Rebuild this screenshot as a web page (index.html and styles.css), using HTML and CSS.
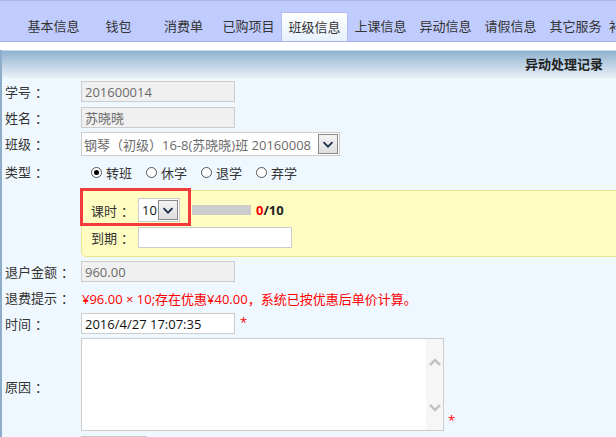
FILE: index.html
```html
<!DOCTYPE html>
<html lang="zh-CN">
<head>
    <meta charset="UTF-8">
    <title>异动处理记录</title>
    <link rel="stylesheet" href="styles.css">
</head>
<body>
    <div class="tabs">
        <a class="tab">基本信息</a>
        <a class="tab">钱包</a>
        <a class="tab">消费单</a>
        <a class="tab">已购项目</a>
        <a class="tab active">班级信息</a>
        <a class="tab">上课信息</a>
        <a class="tab">异动信息</a>
        <a class="tab">请假信息</a>
        <a class="tab">其它服务</a>
        <a class="tab last">补课信息</a>
    </div>

    <div class="panel">
        <div class="panel-head">异动处理记录</div>
        <div class="form">
            <div class="row r-no">
                <span class="lbl">学号<span class="colon">：</span></span>
                <input class="field readonly" type="text" value="201600014" readonly>
            </div>
            <div class="row r-name">
                <span class="lbl">姓名<span class="colon">：</span></span>
                <input class="field readonly" type="text" value="苏晓晓" readonly>
            </div>
            <div class="row r-class">
                <span class="lbl">班级<span class="colon">：</span></span>
                <div class="select select-class">
                    <span class="select-text">钢琴（初级）16-8(苏晓晓)班 20160008</span>
                    <span class="select-btn">
                        <svg width="20" height="20" viewBox="0 0 20 20"><path d="M5 8 L10 13 L15 8" fill="none" stroke="#1f2c48" stroke-width="2"/></svg>
                    </span>
                </div>
            </div>
            <div class="row r-type">
                <span class="lbl">类型<span class="colon">：</span></span>
                <div class="radios">
                    <span class="radio checked"></span><span class="radio-text">转班</span>
                    <span class="radio"></span><span class="radio-text">休学</span>
                    <span class="radio"></span><span class="radio-text">退学</span>
                    <span class="radio"></span><span class="radio-text">弃学</span>
                </div>
            </div>

            <div class="transfer">
                <div class="mark"></div>
                <div class="row">
                    <span class="lbl-in">课时<span class="colon">：</span></span>
                    <div class="select select-hours">
                        <span class="select-text dark">10</span>
                        <span class="select-btn">
                            <svg width="20" height="20" viewBox="0 0 20 20"><path d="M5 8 L10 13 L15 8" fill="none" stroke="#1f2c48" stroke-width="2"/></svg>
                        </span>
                    </div>
                    <span class="progress"></span>
                    <span class="count"><em>0</em>/10</span>
                </div>
                <div class="row r-due">
                    <span class="lbl-in">到期<span class="colon">：</span></span>
                    <input class="field due" type="text" value="">
                </div>
            </div>

            <div class="row r-amount">
                <span class="lbl">退户金额<span class="colon">：</span></span>
                <input class="field readonly" type="text" value="960.00" readonly>
            </div>
            <div class="row r-hint">
                <span class="lbl">退费提示<span class="colon">：</span></span>
                <span class="hint">¥96.00 × 10;存在优惠¥40.00，系统已按优惠后单价计算。</span>
            </div>
            <div class="row r-time">
                <span class="lbl">时间<span class="colon">：</span></span>
                <input class="field plain" type="text" value="2016/4/27 17:07:35">
                <span class="req">*</span>
            </div>
            <div class="row r-reason">
                <span class="lbl">原因<span class="colon">：</span></span>
                <div class="textarea">
                    <span class="textarea-body"></span>
                    <span class="scroll">
                        <svg width="14" height="10" viewBox="0 0 14 10"><path d="M2 8 L7 3 L12 8" fill="none" stroke="#c4c4c4" stroke-width="2.5"/></svg>
                        <svg width="14" height="10" viewBox="0 0 14 10"><path d="M2 2 L7 7 L12 2" fill="none" stroke="#c4c4c4" stroke-width="2.5"/></svg>
                    </span>
                </div>
                <span class="req req-bottom">*</span>
            </div>
            <div class="row r-next">
                <span class="lbl"></span>
                <span class="next-box"></span>
            </div>
        </div>
    </div>
</body>
</html>
```

FILE: styles.css
```css
body {
    margin: 0;
    font-family: "Open Sans", "Noto Sans CJK SC", sans-serif;
    font-size: 13px;
    color: #333;
    background: #fff;
    overflow: hidden;
    height: 437px;
}
.tabs {
    display: flex;
    align-items: flex-end;
    height: 42px;
    box-sizing: border-box;
    padding-left: 21px;
    background: #c1ccfe;
    border-top: 1px solid #a9b7e6;
    border-bottom: 1px solid #a9b0f0;
    overflow: hidden;
}
.tab {
    flex: 0 0 65px;
    height: 29px;
    line-height: 29px;
    text-align: center;
    color: #333;
    white-space: nowrap;
}
.tab.active {
    flex-basis: 67px;
    height: 30px;
    line-height: 28px;
    margin-bottom: -1px;
    box-sizing: border-box;
    border: 1px solid #b4bcf2;
    border-bottom: none;
    background: linear-gradient(#ffffff, #e5f1fb);
}
.tab.last {
    text-align: left;
    padding-left: 1px;
}
.panel {
    margin-top: 8px;
    border-left: 2px solid #8dadcb;
    background: #f0f8ff;
    height: 387px;
}
.panel-head {
    height: 28px;
    box-sizing: border-box;
    border-top: 1px solid #c6d9ea;
    background: linear-gradient(#8fb2d0, #e9f1f8);
    text-align: right;
    padding-right: 13px;
    line-height: 27px;
    font-weight: bold;
    color: #222;
}
.form {
    padding: 3px 0 0 3px;
}
.row {
    display: flex;
    align-items: center;
}
.lbl {
    flex: none;
    width: 76px;
    color: #333;
    line-height: 18px;
    white-space: nowrap;
}
.colon {
    padding-left: 4px;
}
.field {
    box-sizing: border-box;
    width: 154px;
    height: 21px;
    margin: 0;
    padding: 0 3px;
    border: 1px solid #ccc;
    font-family: inherit;
    font-size: 13px;
    outline: none;
}
.field.readonly {
    background: #f0f0f0;
    color: #6b6b6b;
}
.field.plain {
    background: #fff;
    color: #111;
}
.r-name {
    margin-top: 5px;
}
.r-class {
    margin-top: 4px;
}
.select {
    display: flex;
    align-items: center;
    box-sizing: border-box;
    height: 24px;
    border: 1px solid #ccc;
    background: #fff;
}
.select-class {
    width: 259px;
}
.select-text {
    flex: 1;
    padding-left: 2px;
    color: #6b6b6b;
    white-space: nowrap;
    overflow: hidden;
}
.select-text.dark {
    color: #111;
}
.select-btn {
    flex: none;
    width: 20px;
    height: 20px;
    margin-right: 1px;
    box-sizing: border-box;
    border: 1px solid #8a8a8a;
    background: linear-gradient(#f4f4f4, #dedede);
    display: flex;
    align-items: center;
    justify-content: center;
}
.select-btn svg {
    width: 18px;
    height: 18px;
}
.r-type {
    margin-top: 7px;
    height: 18px;
}
.radios {
    display: flex;
    align-items: center;
    margin-left: 10px;
}
.radio {
    width: 11px;
    height: 11px;
    box-sizing: border-box;
    border: 1px solid #555;
    border-radius: 50%;
    background: #fff;
    display: flex;
    align-items: center;
    justify-content: center;
}
.radio.checked::after {
    content: "";
    width: 5px;
    height: 5px;
    border-radius: 50%;
    background: #000;
}
.radio-text {
    margin-left: 4px;
    margin-right: 14px;
    color: #333;
}
.transfer {
    position: relative;
    margin: 9px -2px 0 76px;
    height: 67px;
    box-sizing: border-box;
    padding: 7px 0 0 9px;
    background: #fffdc1;
    border: 1px solid #ece48a;
    border-radius: 0 0 0 5px;
}
.mark {
    position: absolute;
    left: -2px;
    top: -3px;
    width: 111px;
    height: 38px;
    box-sizing: border-box;
    border: 3px solid #f23c3c;
}
.lbl-in {
    flex: none;
    width: 47px;
    color: #333;
    white-space: nowrap;
}
.select-hours {
    width: 42px;
}
.select-hours .select-text {
    padding-left: 3px;
}
.progress {
    width: 59px;
    height: 10px;
    margin-left: 12px;
    background: #ccc;
}
.count {
    margin-left: 5px;
    font-weight: bold;
    color: #222;
}
.count em {
    font-style: normal;
    color: #f00;
}
.r-due {
    margin-top: 5px;
}
.field.due {
    background: #fff;
}
.r-amount {
    margin-top: 4px;
}
.r-hint {
    margin-top: 7px;
    height: 18px;
}
.hint {
    padding-left: 1px;
    color: #f00;
    white-space: nowrap;
}
.r-time {
    margin-top: 6px;
}
.req {
    margin-left: 5px;
    color: #f00;
    align-self: flex-start;
    line-height: 18px;
}
.r-reason {
    margin-top: 4px;
}
.r-reason .lbl {
    margin-top: 5px;
}
.textarea {
    display: flex;
    width: 363px;
    height: 93px;
    box-sizing: border-box;
    border: 1px solid #ccc;
    background: #fff;
}
.textarea-body {
    flex: 1;
}
.scroll {
    flex: none;
    width: 17px;
    background: #f6f6f6;
    display: flex;
    flex-direction: column;
    justify-content: space-between;
    align-items: center;
    padding: 18px 0 17px;
}
.req-bottom {
    align-self: flex-end;
    margin-left: 4px;
    margin-bottom: 2px;
}
.r-next {
    margin-top: 5px;
}
.next-box {
    width: 66px;
    height: 21px;
    box-sizing: border-box;
    border: 1px solid #c8c8c8;
    background: #f0f0f0;
}
```
